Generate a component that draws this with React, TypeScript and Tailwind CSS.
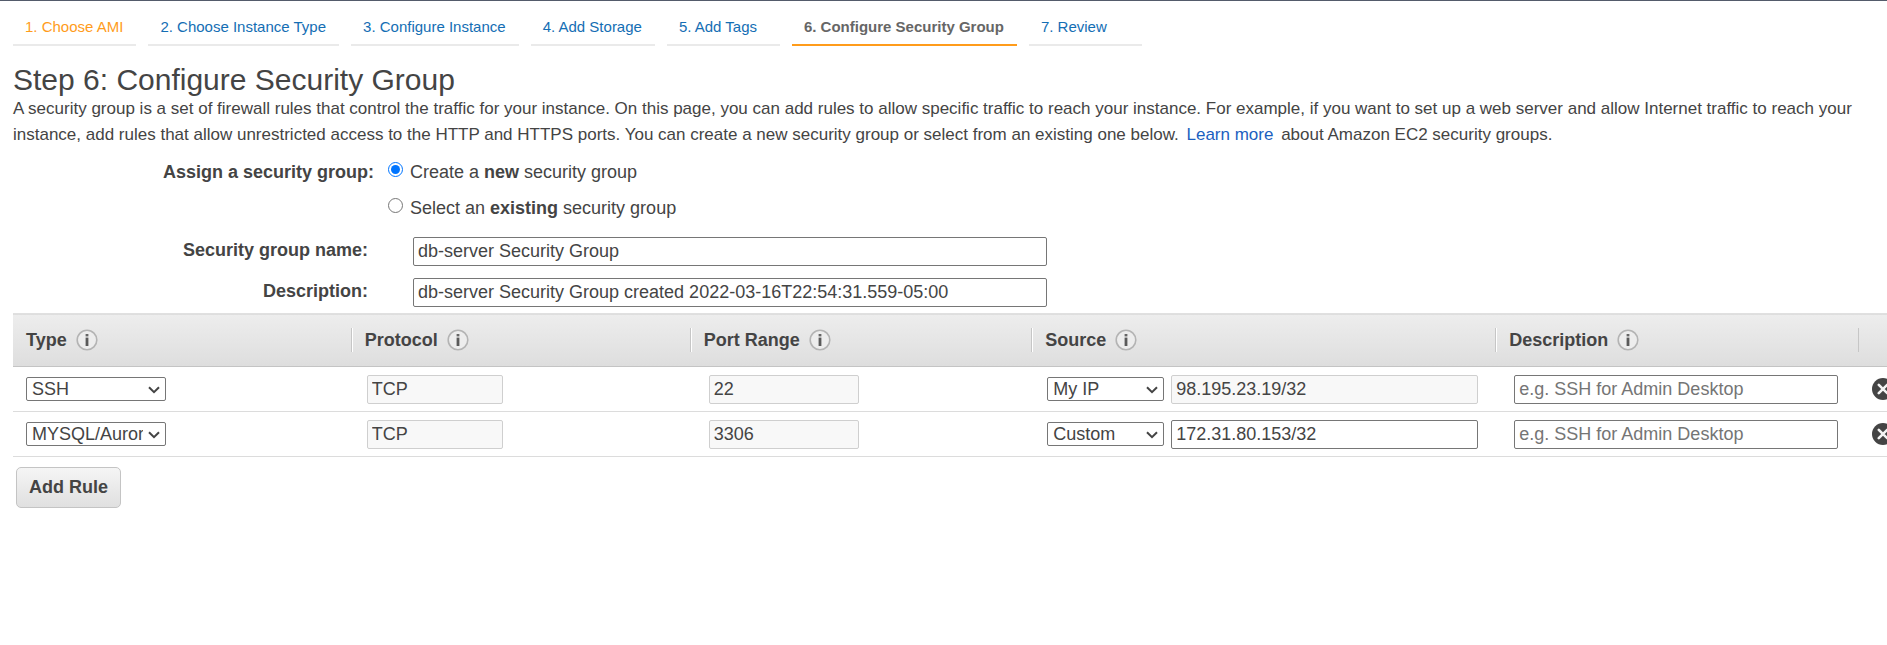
import type { ReactNode } from 'react';

type StepState = 'first' | 'link' | 'current';

const steps: { label: string; state: StepState }[] = [
  { label: '1. Choose AMI', state: 'first' },
  { label: '2. Choose Instance Type', state: 'link' },
  { label: '3. Configure Instance', state: 'link' },
  { label: '4. Add Storage', state: 'link' },
  { label: '5. Add Tags', state: 'link' },
  { label: '6. Configure Security Group', state: 'current' },
  { label: '7. Review', state: 'link' },
];

const stepStyles: Record<StepState, string> = {
  first: 'border-[#eaeaea] text-[#ff9c1b]',
  link: 'border-[#eaeaea] text-[#146eb4]',
  current: 'border-[#ff9c1b] font-bold text-[#666]',
};

const rules = [
  { type: 'SSH', protocol: 'TCP', port: '22', source: 'My IP', cidr: '98.195.23.19/32', locked: true },
  { type: 'MYSQL/Aurora', protocol: 'TCP', port: '3306', source: 'Custom', cidr: '172.31.80.153/32', locked: false },
];

const columns = ['Type', 'Protocol', 'Port Range', 'Source', 'Description'];

const fieldBase = 'h-[29px] rounded-[2px] border px-1 text-[18px] ';
const fieldOpen = fieldBase + 'border-[#767676] bg-white placeholder:text-[#757575]';
const fieldLocked = fieldBase + 'border-[#cfcfcf] bg-[#f8f8f8]';

function InfoIcon() {
  return (
    <svg viewBox="0 0 22 22" className="size-[22px]" aria-hidden="true">
      <circle cx="11" cy="11" r="9.8" fill="#ededed" stroke="#b4b4b4" strokeWidth="1.6" />
      <rect x="9.6" y="5" width="2.8" height="2.4" fill="#666" />
      <rect x="9.6" y="8.6" width="2.8" height="8.4" fill="#5a5a5a" />
    </svg>
  );
}

function RemoveIcon() {
  return (
    <svg viewBox="0 0 22 22" className="size-[22px]" aria-hidden="true">
      <circle cx="11" cy="11" r="11" fill="#444" />
      <path d="M6.8 6.8l8.4 8.4M15.2 6.8l-8.4 8.4" stroke="#f4f4f4" strokeWidth="2.6" strokeLinecap="round" />
    </svg>
  );
}

function Select({ label, value, className }: { label: string; value: string; className: string }) {
  return (
    <span className={'relative inline-flex shrink-0 ' + className}>
      <select
        aria-label={label}
        defaultValue={value}
        className="h-6 w-full appearance-none overflow-hidden rounded-[2px] border border-[#767676] bg-white pr-[22px] pl-[5px] text-[18px] leading-[22px]"
      >
        <option>{value}</option>
      </select>
      <svg viewBox="0 0 12 8" className="pointer-events-none absolute top-[9px] right-[6px] h-2 w-3" aria-hidden="true">
        <path d="M1 1.2l5 5 5-5" fill="none" stroke="#444" strokeWidth="2" />
      </svg>
    </span>
  );
}

function RadioOption({ id, checked, children }: { id: string; checked?: boolean; children: ReactNode }) {
  return (
    <div className="flex h-9 items-start">
      <input id={id} type="radio" name="assign" defaultChecked={checked} className="mt-px mr-[7px] size-[15px]" />
      <label htmlFor={id} className="leading-[22px]">
        {children}
      </label>
    </div>
  );
}

export default function App() {
  return (
    <div className="overflow-hidden border-t border-[#545b6b] bg-white font-['Liberation_Sans',Arial,sans-serif] text-[18px] text-[#444]">
      <div className="w-[calc(100%+24px)] pl-[13px]">
        <nav className="flex gap-3 pt-2 text-[15px]">
          {steps.map((s) => (
            <a
              key={s.label}
              href="#"
              aria-current={s.state === 'current' ? 'step' : undefined}
              className={'h-[37px] min-w-[113px] border-b-2 pr-[13px] pl-3 leading-[36px] ' + stepStyles[s.state]}
            >
              {s.label}
            </a>
          ))}
        </nav>

        <h1 className="pt-[18px] text-[30px] leading-8">Step 6: Configure Security Group</h1>
        <p className="text-[17px] leading-[26px]">
          A security group is a set of firewall rules that control the traffic for your instance. On this page, you can
          add rules to allow specific traffic to reach your instance. For example, if you want to set up a web server and
          allow Internet traffic to reach your instance, add rules that allow unrestricted access to the HTTP and HTTPS
          ports. You can create a new security group or select from an existing one below.{' '}
          <a href="#" className="px-[3px] text-[#1c5fc0]">
            Learn more
          </a>{' '}
          about Amazon EC2 security groups.
        </p>

        <div className="flex pt-[13px]" role="radiogroup" aria-labelledby="assign-label">
          <div id="assign-label" className="w-[361px] text-right leading-[22px] font-bold">
            Assign a security group:
          </div>
          <div className="pl-[14px]">
            <RadioOption id="new-group" checked>
              Create a <b>new</b> security group
            </RadioOption>
            <RadioOption id="existing-group">
              Select an <b>existing</b> security group
            </RadioOption>
          </div>
        </div>

        <div className="mt-1 mb-3 flex">
          <label htmlFor="group-name" className="mr-[45px] w-[355px] text-right leading-[26px] font-bold">
            Security group name:
          </label>
          <input id="group-name" defaultValue="db-server Security Group" className={'w-[634px] ' + fieldOpen} />
        </div>
        <div className="mb-[6px] flex">
          <label htmlFor="group-description" className="mr-[45px] w-[355px] text-right leading-[26px] font-bold">
            Description:
          </label>
          <input
            id="group-description"
            defaultValue="db-server Security Group created 2022-03-16T22:54:31.559-05:00"
            className={'w-[634px] ' + fieldOpen}
          />
        </div>

        <table className="w-full table-fixed border-collapse text-left">
          <colgroup>
            <col className="w-[17.8%]" />
            <col className="w-[17.85%]" />
            <col className="w-[18%]" />
            <col className="w-[24.45%]" />
            <col className="w-[19.1%]" />
            <col />
          </colgroup>
          <thead>
            <tr className="h-[53px] border-t border-b border-t-[#e0e0e0] border-b-[#c4c4c4] bg-linear-to-b from-[#ededed] to-[#dedede]">
              {columns.map((c, i) => (
                <th key={c} scope="col" className="p-0">
                  <div
                    className={
                      'flex h-6 items-center gap-[9px] pl-[13px] ' +
                      (i === 0 ? '' : 'border-l border-[#c6c6c6] shadow-[inset_1px_0_0_#fff]')
                    }
                  >
                    {c}
                    <InfoIcon />
                  </div>
                </th>
              ))}
              <th scope="col" aria-label="Remove" className="p-0">
                <div className="h-6 border-l border-[#c6c6c6]" />
              </th>
            </tr>
          </thead>
          <tbody>
            {rules.map((r) => (
              <tr key={r.type} className="h-[45px] border-b border-[#dcdcdc]">
                <td className="p-0 pl-[13px]">
                  <div className="flex items-center">
                    <Select label="Type" value={r.type} className="w-[140px]" />
                  </div>
                </td>
                <td className="p-0 pl-4">
                  <input aria-label="Protocol" readOnly value={r.protocol} className={'block w-[136px] ' + fieldLocked} />
                </td>
                <td className="p-0 pl-[19px]">
                  <input aria-label="Port range" readOnly value={r.port} className={'block w-[150px] ' + fieldLocked} />
                </td>
                <td className="p-0 pr-[17px] pl-4">
                  <div className="flex items-center gap-[7px]">
                    <Select label="Source" value={r.source} className="w-[117px]" />
                    <input
                      aria-label="Source address"
                      readOnly={r.locked}
                      defaultValue={r.cidr}
                      className={'min-w-0 flex-1 ' + (r.locked ? fieldLocked : fieldOpen)}
                    />
                  </div>
                </td>
                <td className="p-0 pr-5 pl-[19px]">
                  <input
                    aria-label="Rule description"
                    placeholder="e.g. SSH for Admin Desktop"
                    className={'block w-full ' + fieldOpen}
                  />
                </td>
                <td className="p-0 pl-[14px]">
                  <button type="button" aria-label={'Remove rule ' + r.type} className="block">
                    <RemoveIcon />
                  </button>
                </td>
              </tr>
            ))}
          </tbody>
        </table>

        <button
          type="button"
          className="mt-[10px] ml-[3px] h-[41px] rounded-[5px] border border-[#c4c4c4] bg-linear-to-b from-[#f5f5f5] to-[#e0e0e0] px-3 font-bold"
        >
          Add Rule
        </button>
      </div>
    </div>
  );
}
